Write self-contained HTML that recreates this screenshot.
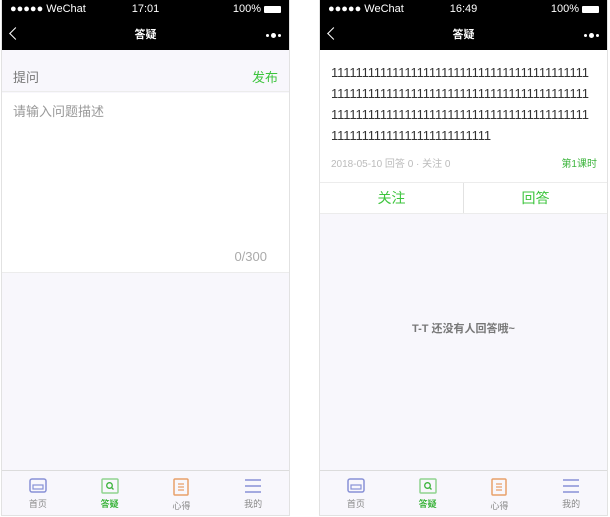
<!DOCTYPE html>
<html><head><meta charset="utf-8"><style>
*{margin:0;padding:0;box-sizing:border-box}
body{width:610px;height:517px;background:#fff;font-family:"Liberation Sans","Noto Sans CJK SC",sans-serif;position:relative;overflow:hidden}
.ph{position:absolute;top:0;width:289px;height:516px;background:#f8f7fc;border:1px solid #e2e2e2;border-top:none;overflow:hidden}
.sb{position:absolute;left:0;right:0;top:0;height:50px;background:#000;color:#fff}
.sb .l{position:absolute;left:8px;top:3px;font-size:11px}
.sb .c{position:absolute;left:0;right:0;top:3px;text-align:center;font-size:11px}
.sb .r{position:absolute;right:8px;top:3px;font-size:11px}
.bat{display:inline-block;width:17px;height:7px;background:#fff;border-radius:1px;vertical-align:-1px;margin-left:3px}
.sb .t{position:absolute;left:0;right:0;top:26px;text-align:center;font-size:11px;font-weight:bold}
.back{position:absolute;left:9px;top:29px;width:9px;height:9px;border-left:1.5px solid #fff;border-bottom:1.5px solid #fff;transform:rotate(45deg)}
.dots{position:absolute;right:8px;top:33px;display:flex;gap:2px;align-items:center}
.dots i{display:block;width:3px;height:3px;border-radius:50%;background:#fff}
.dots i.b{width:5px;height:5px}
.tab{position:absolute;left:0;right:0;bottom:0;height:45px;border-top:1px solid #dcdcdc;background:#f8f7fc;display:flex}
.tab div{flex:1;text-align:center;font-size:9px;color:#888;padding-top:7px}
.tab svg{display:block;margin:0 auto 3px}
.tab .a{color:#3cb43c;font-weight:bold}
.ones div{white-space:nowrap;height:21px}
</style></head><body>

<div class="ph" style="left:1px">
 <div class="sb"><div class="l">●●●●● WeChat</div><div class="c">17:01</div><div class="r">100%<span class="bat"></span></div><div class="back"></div><div class="t">答疑</div><div class="dots"><i></i><i class="b"></i><i></i></div></div>
 <div style="position:absolute;top:50px;left:0;right:0;height:42px;border-bottom:1px solid #ececec">
  <span style="position:absolute;left:11px;top:17px;font-size:13px;color:#777">提问</span>
  <span style="position:absolute;right:11px;top:17px;font-size:13px;color:#3cc43c">发布</span>
 </div>
 <div style="position:absolute;top:93px;left:0;right:0;height:180px;background:#fff;border-bottom:1px solid #ececec">
  <span style="position:absolute;left:11px;top:8px;font-size:13px;color:#999">请输入问题描述</span>
  <span style="position:absolute;right:22px;top:156px;font-size:13px;color:#aaa">0/300</span>
 </div>
 <div class="tab">
  <div><svg width="18" height="16"><rect x="1" y="1" width="16" height="13" rx="2" fill="none" stroke="#8891d6" stroke-width="1.5"/><rect x="4" y="7" width="10" height="4" fill="none" stroke="#8891d6" stroke-width="1.2"/></svg>首页</div>
  <div class="a"><svg width="18" height="16"><rect x="1" y="1" width="16" height="14" rx="1" fill="none" stroke="#8fd48f" stroke-width="1.5"/><circle cx="8.5" cy="7.5" r="2.8" fill="none" stroke="#3cb43c" stroke-width="1.3"/><path d="M10.5 9.5l2 2" stroke="#3cb43c" stroke-width="1.3"/></svg>答疑</div>
  <div><svg width="18" height="18"><rect x="2" y="1" width="14" height="16" rx="1" fill="none" stroke="#e8a06a" stroke-width="1.5"/><path d="M6 6h6M6 9h6M6 12h6" stroke="#e8a06a" stroke-width="1.2"/></svg>心得</div>
  <div><svg width="18" height="16"><path d="M1 2h16M1 8h16M1 14h16" stroke="#8891d6" stroke-width="1.5"/></svg>我的</div>
 </div>
</div>

<div class="ph" style="left:319px">
 <div class="sb"><div class="l">●●●●● WeChat</div><div class="c">16:49</div><div class="r">100%<span class="bat"></span></div><div class="back"></div><div class="t">答疑</div><div class="dots"><i></i><i class="b"></i><i></i></div></div>
 <div style="position:absolute;top:50px;left:0;right:0;height:133px;background:#fff;border-bottom:1px solid #ececec">
  <div class="ones" style="position:absolute;left:11px;top:12px;font-size:13px;line-height:21px;letter-spacing:-0.15px;color:#333">
   <div>111111111111111111111111111111111111111111</div>
   <div>111111111111111111111111111111111111111111</div>
   <div>111111111111111111111111111111111111111111</div>
   <div>11111111111111111111111111</div>
  </div>
  <span style="position:absolute;left:11px;top:105px;font-size:10px;color:#bbb">2018-05-10 回答 0 · 关注 0</span>
  <span style="position:absolute;right:10px;top:105px;font-size:10px;color:#3cb43c">第1课时</span>
 </div>
 <div style="position:absolute;top:183px;left:0;right:0;height:31px;background:#fff;border-bottom:1px solid #ececec;display:flex">
  <div style="flex:1;text-align:center;line-height:30px;font-size:14px;color:#3cc43c;border-right:1px solid #e2e2e2">关注</div>
  <div style="flex:1;text-align:center;line-height:30px;font-size:14px;color:#3cc43c">回答</div>
 </div>
 <div style="position:absolute;top:320px;left:0;right:0;text-align:center;font-size:11px;font-weight:bold;color:#777">T-T 还没有人回答哦~</div>
 <div class="tab">
  <div><svg width="18" height="16"><rect x="1" y="1" width="16" height="13" rx="2" fill="none" stroke="#8891d6" stroke-width="1.5"/><rect x="4" y="7" width="10" height="4" fill="none" stroke="#8891d6" stroke-width="1.2"/></svg>首页</div>
  <div class="a"><svg width="18" height="16"><rect x="1" y="1" width="16" height="14" rx="1" fill="none" stroke="#8fd48f" stroke-width="1.5"/><circle cx="8.5" cy="7.5" r="2.8" fill="none" stroke="#3cb43c" stroke-width="1.3"/><path d="M10.5 9.5l2 2" stroke="#3cb43c" stroke-width="1.3"/></svg>答疑</div>
  <div><svg width="18" height="18"><rect x="2" y="1" width="14" height="16" rx="1" fill="none" stroke="#e8a06a" stroke-width="1.5"/><path d="M6 6h6M6 9h6M6 12h6" stroke="#e8a06a" stroke-width="1.2"/></svg>心得</div>
  <div><svg width="18" height="16"><path d="M1 2h16M1 8h16M1 14h16" stroke="#8891d6" stroke-width="1.5"/></svg>我的</div>
 </div>
</div>
</body></html>
